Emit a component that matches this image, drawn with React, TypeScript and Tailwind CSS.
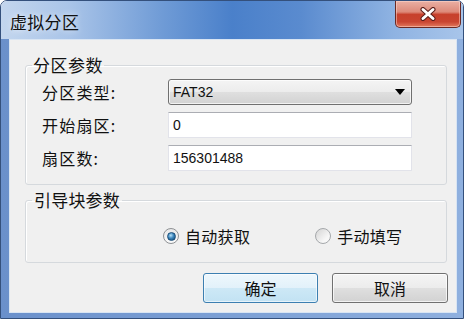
import React from "react";

function Radio({ checked, label }: { checked: boolean; label: string }) {
  return (
    <div className="flex items-center gap-[6px]">
      <div
        className={
          checked
            ? "w-[16px] h-[16px] rounded-full border border-[#8e9194] bg-[linear-gradient(180deg,#e8e8e8,#fbfbfb)] flex items-center justify-center"
            : "w-[16px] h-[16px] rounded-full border border-[#a5a8ab] bg-[linear-gradient(135deg,#d4d4d4,#f7f7f7_70%)] flex items-center justify-center"
        }
      >
        {checked && (
          <div className="w-[9px] h-[9px] rounded-full bg-[radial-gradient(circle_at_40%_35%,#b9e3f8_0%,#3c86bd_45%,#0c4168_100%)] border border-[#1c4f7a]" />
        )}
      </div>
      <span className="text-[16px] leading-[20px] tracking-[0.3px]">{label}</span>
    </div>
  );
}

function Field({ value }: { value: string }) {
  return (
    <div className="w-[244px] h-[26px] bg-white border border-[#e2e3ea] border-t-[#abadb3] flex items-center pl-[4px] font-['Liberation_Sans','Noto_Sans_CJK_SC',sans-serif] text-[14px]">
      {value}
    </div>
  );
}

export default function App() {
  return (
    <div className="w-[464px] h-[319px] flex flex-col border border-[#34507c] rounded-t-[7px] overflow-hidden font-['Noto_Sans_CJK_SC',sans-serif] text-[#111]">
      <div className="h-[38px] shrink-0 flex items-start justify-between bg-[linear-gradient(90deg,#c3d6ee_0%,#a9c4e8_15%,#6f9bd6_35%,#4a80ca_50%,#5a8bcf_65%,#8fb3e2_85%,#a8c5ea_100%)]">
        <div className="pl-[9px] pt-[11px] text-[17px] leading-[20px] tracking-[0.3px] [text-shadow:0_0_6px_rgba(255,255,255,0.9)]">
          虚拟分区
        </div>
        <div className="w-[66px] h-[27px] mr-[2px] rounded-b-[5px] border border-t-0 border-[#6b2a24] bg-[linear-gradient(180deg,#eab0a4_0%,#dd8a7a_42%,#c7402c_52%,#c94531_80%,#e27a5e_100%)] shadow-[inset_0_0_0_1px_rgba(255,220,210,0.5)] flex items-center justify-center">
          <svg width="18" height="14" viewBox="0 0 18 14">
            <path d="M4 2.5 L14 11.5 M14 2.5 L4 11.5" stroke="#5a1e1a" strokeWidth="5" strokeLinecap="round" />
            <path d="M4 2.5 L14 11.5 M14 2.5 L4 11.5" stroke="#ffffff" strokeWidth="3" strokeLinecap="round" />
          </svg>
        </div>
      </div>
      <div className="flex-1 flex pl-[8px] pr-[6px] pb-[5px] bg-[linear-gradient(90deg,#6a90cb,#8fb0df)]">
        <div className="flex-1 flex flex-col border border-[#d9e5f3] bg-[#f0f0f0]">
          <fieldset className="mt-[15px] ml-[15px] mr-[9px] border border-[#d5d9dd] rounded-[3px] shadow-[inset_1px_1px_0_#ffffff]">
            <legend className="ml-[6px] px-[1px] text-[17px] leading-[20px] tracking-[0.5px]">分区参数</legend>
            <div className="flex flex-col gap-[7px] pt-[4px] pb-[13px] pl-[16px]">
              <div className="flex items-center h-[26px]">
                <div className="w-[126px] text-[16px] leading-[20px] tracking-[1.2px]">分区类型:</div>
                <div className="w-[244px] h-[26px] rounded-[3px] border border-[#707070] bg-[linear-gradient(180deg,#f4f4f4_0%,#ececec_50%,#dfdfdf_51%,#d2d2d2_100%)] shadow-[inset_0_0_0_1px_rgba(255,255,255,0.7)] flex items-center justify-between pl-[4px] pr-[6px] font-['Liberation_Sans','Noto_Sans_CJK_SC',sans-serif] text-[14px]">
                  <span>FAT32</span>
                  <svg width="10" height="6" viewBox="0 0 10 6">
                    <path d="M0 0 L10 0 L5 6 Z" fill="#000" />
                  </svg>
                </div>
              </div>
              <div className="flex items-center h-[26px]">
                <div className="w-[126px] text-[16px] leading-[20px] tracking-[1.2px]">开始扇区:</div>
                <Field value="0" />
              </div>
              <div className="flex items-center h-[26px]">
                <div className="w-[126px] text-[16px] leading-[20px] tracking-[1.2px]">扇区数:</div>
                <Field value="156301488" />
              </div>
            </div>
          </fieldset>
          <fieldset className="mt-[5px] ml-[15px] mr-[9px] border border-[#d5d9dd] rounded-[3px] shadow-[inset_1px_1px_0_#ffffff]">
            <legend className="ml-[6px] px-[2px] text-[17px] leading-[20px] tracking-[0.2px]">引导块参数</legend>
            <div className="flex items-center gap-[65px] pt-[16px] pb-[16px] pl-[137px]">
              <Radio checked label="自动获取" />
              <Radio checked={false} label="手动填写" />
            </div>
          </fieldset>
          <div className="flex justify-end gap-[14px] mt-[10px] mr-[8px]">
            <div className="w-[115px] h-[30px] rounded-[3px] border border-[#3c7fb1] bg-[linear-gradient(180deg,#eef7fc_0%,#e2f1fa_50%,#cde8f6_51%,#c2e2f3_100%)] shadow-[inset_0_0_0_1px_rgba(255,255,255,0.6)] flex items-center justify-center text-[16px]">
              确定
            </div>
            <div className="w-[116px] h-[30px] rounded-[3px] border border-[#707070] bg-[linear-gradient(180deg,#f4f4f4_0%,#ececec_50%,#dfdfdf_51%,#d2d2d2_100%)] shadow-[inset_0_0_0_1px_rgba(255,255,255,0.7)] flex items-center justify-center text-[16px]">
              取消
            </div>
          </div>
        </div>
      </div>
    </div>
  );
}
